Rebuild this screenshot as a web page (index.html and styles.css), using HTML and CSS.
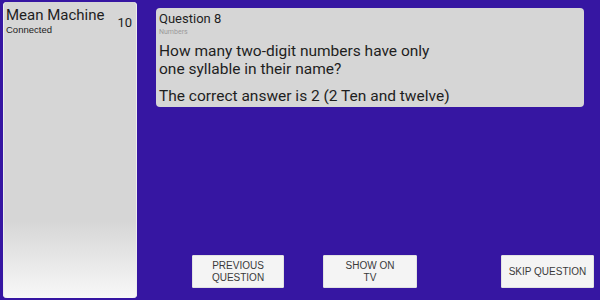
FILE: index.html
```html
<!DOCTYPE html>
<html>
<head>
<meta charset="utf-8">
<link rel="stylesheet" href="styles.css">
</head>
<body>
<div class="app">
  <aside class="team">
    <div class="team-head">
      <div class="team-info">
        <div class="team-name">Mean Machine</div>
        <div class="team-status">Connected</div>
      </div>
      <div class="team-score">10</div>
    </div>
  </aside>
  <main class="main">
    <section class="card">
      <div class="q-title">Question 8</div>
      <div class="q-cat">Numbers</div>
      <p class="q-text">How many two-digit numbers have only<br>one syllable in their name?</p>
      <p class="q-answer">The correct answer is 2 (2 Ten and twelve)</p>
    </section>
    <div class="actions">
      <button class="btn btn-prev">PREVIOUS<br>QUESTION</button>
      <button class="btn btn-tv">SHOW ON<br>TV</button>
      <button class="btn btn-skip">SKIP QUESTION</button>
    </div>
  </main>
</div>
</body>
</html>
```
FILE: styles.css
```css
html, body {
  margin: 0;
  padding: 0;
}
body {
  background: #3616a2;
  width: 600px;
  height: 300px;
  overflow: hidden;
  font-family: Roboto, "Liberation Sans", sans-serif;
  color: #1e1e1e;
}
.app {
  display: flex;
  height: 300px;
  box-sizing: border-box;
  padding: 2px 6px 2px 3px;
}
.team {
  width: 134px;
  flex: none;
  border-radius: 4px;
  background: linear-gradient(to bottom, #d6d6d6 0%, #d6d6d6 74%, #f8f8f8 100%);
  box-shadow: inset 1px 0 0 #ececec, inset -1px 0 0 #ececec;
}
.team-head {
  display: flex;
  justify-content: space-between;
  align-items: flex-start;
  padding: 4px 5px 0 3px;
}
.team-name {
  font-size: 15px;
  line-height: 18px;
}
.team-status {
  font-family: "Liberation Sans", Arial, sans-serif;
  font-size: 9.5px;
  line-height: 11px;
  color: #222;
}
.team-score {
  font-size: 13px;
  line-height: 16px;
  margin-top: 9px;
}
.main {
  flex: 1;
  display: flex;
  flex-direction: column;
  justify-content: space-between;
  margin-left: 19px;
}
.card {
  margin-top: 6px;
  margin-right: 10px;
  background: #d6d6d6;
  border-radius: 4px;
  padding: 3px 3px 3px 3px;
  height: 99px;
  box-sizing: border-box;
}
.q-title {
  font-size: 13px;
  line-height: 15px;
}
.q-cat {
  margin-top: 2px;
  font-size: 7px;
  line-height: 9px;
  color: #9a9a9a;
}
.q-text {
  margin: 5px 0 0;
  font-size: 15.5px;
  line-height: 18px;
}
.q-answer {
  margin: 9px 0 0;
  font-size: 15.5px;
  line-height: 18px;
}
.actions {
  display: flex;
  align-items: flex-end;
  padding: 0 0 10px 36px;
}
.btn {
  font-family: "Liberation Sans", Arial, sans-serif;
  font-size: 10px;
  line-height: 11.5px;
  color: #3a3a3a;
  background: #f4f4f4;
  border: 1px solid #e2e2e2;
  border-radius: 1px;
  height: 33px;
  padding: 0;
  text-align: center;
}
.btn-prev {
  width: 92px;
}
.btn-tv {
  width: 94px;
  margin-left: 39px;
}
.btn-skip {
  width: 93px;
  margin-left: auto;
}
```
